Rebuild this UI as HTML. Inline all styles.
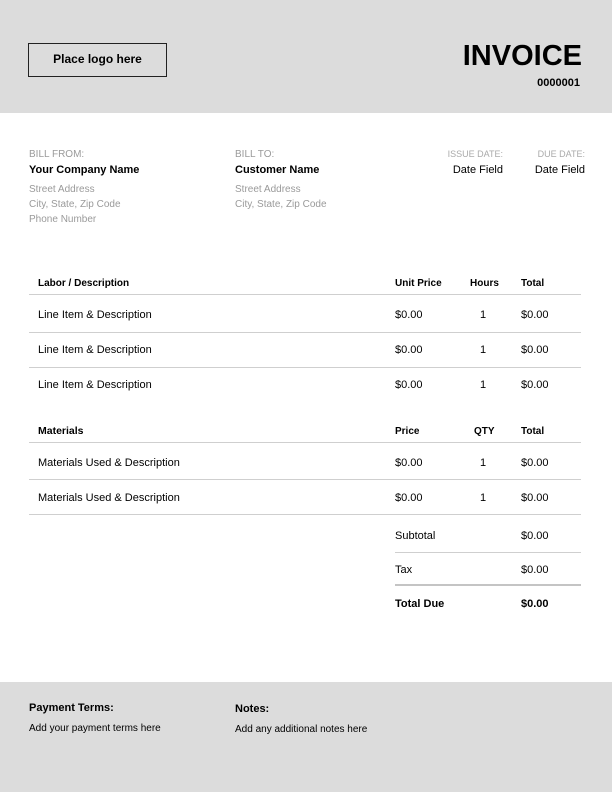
<html><head><style>
body{margin:0;width:612px;height:792px;position:relative;font-family:"Liberation Sans",Arial,sans-serif;background:#fff;overflow:hidden}
.a{position:absolute;white-space:nowrap}
.g{color:#9a9a9a;font-size:10px}
.b{font-weight:bold}
.t{font-size:11px;color:#000}
.l{position:absolute;height:1px;background:#cfcfcf}
</style></head><body>
<div class="a" style="left:0;top:0;width:612px;height:113px;background:#dcdcdc"></div>
<div class="a" style="left:28px;top:43px;width:139px;height:34px;border:1.5px solid #222;box-sizing:border-box;text-align:center;line-height:31px;font-size:12px;font-weight:bold">Place logo here</div>
<div class="a b" style="right:30px;top:40px;font-size:29px">INVOICE</div>
<div class="a b" style="right:32px;top:77px;font-size:11px">0000001</div>

<div class="a g" style="left:29px;top:149px">BILL FROM:</div>
<div class="a b t" style="left:29px;top:164px">Your Company Name</div>
<div class="a g" style="left:29px;top:184px">Street Address</div>
<div class="a g" style="left:29px;top:199px">City, State, Zip Code</div>
<div class="a g" style="left:29px;top:214px">Phone Number</div>
<div class="a g" style="left:235px;top:149px">BILL TO:</div>
<div class="a b t" style="left:235px;top:164px">Customer Name</div>
<div class="a g" style="left:235px;top:184px">Street Address</div>
<div class="a g" style="left:235px;top:199px">City, State, Zip Code</div>
<div class="a g" style="right:109px;top:149px;font-size:9px;color:#aaa">ISSUE DATE:</div>
<div class="a g" style="right:27px;top:149px;font-size:9px;color:#aaa">DUE DATE:</div>
<div class="a t" style="right:109px;top:164px">Date Field</div>
<div class="a t" style="right:27px;top:164px">Date Field</div>

<div class="a b" style="left:38px;top:278px;font-size:10px">Labor / Description</div>
<div class="a b" style="left:395px;top:278px;font-size:10px">Unit Price</div>
<div class="a b" style="left:470px;top:278px;font-size:10px">Hours</div>
<div class="a b" style="left:521px;top:278px;font-size:10px">Total</div>
<div class="l" style="left:29px;width:552px;top:294px"></div>
<div class="a t" style="left:38px;top:309px">Line Item &amp; Description</div><div class="a t" style="left:395px;top:309px">$0.00</div><div class="a t" style="left:480px;top:309px">1</div><div class="a t" style="left:521px;top:309px">$0.00</div>
<div class="l" style="left:29px;width:552px;top:332px"></div>
<div class="a t" style="left:38px;top:344px">Line Item &amp; Description</div><div class="a t" style="left:395px;top:344px">$0.00</div><div class="a t" style="left:480px;top:344px">1</div><div class="a t" style="left:521px;top:344px">$0.00</div>
<div class="l" style="left:29px;width:552px;top:367px"></div>
<div class="a t" style="left:38px;top:379px">Line Item &amp; Description</div><div class="a t" style="left:395px;top:379px">$0.00</div><div class="a t" style="left:480px;top:379px">1</div><div class="a t" style="left:521px;top:379px">$0.00</div>

<div class="a b" style="left:38px;top:425px;font-size:10.5px">Materials</div>
<div class="a b" style="left:395px;top:426px;font-size:10px">Price</div>
<div class="a b" style="left:474px;top:426px;font-size:10px">QTY</div>
<div class="a b" style="left:521px;top:426px;font-size:10px">Total</div>
<div class="l" style="left:29px;width:552px;top:442px"></div>
<div class="a t" style="left:38px;top:457px">Materials Used &amp; Description</div><div class="a t" style="left:395px;top:457px">$0.00</div><div class="a t" style="left:480px;top:457px">1</div><div class="a t" style="left:521px;top:457px">$0.00</div>
<div class="l" style="left:29px;width:552px;top:479px"></div>
<div class="a t" style="left:38px;top:492px">Materials Used &amp; Description</div><div class="a t" style="left:395px;top:492px">$0.00</div><div class="a t" style="left:480px;top:492px">1</div><div class="a t" style="left:521px;top:492px">$0.00</div>
<div class="l" style="left:29px;width:552px;top:514px"></div>

<div class="a t" style="left:395px;top:530px">Subtotal</div><div class="a t" style="left:521px;top:530px">$0.00</div>
<div class="l" style="left:395px;width:186px;top:552px"></div>
<div class="a t" style="left:395px;top:564px">Tax</div><div class="a t" style="left:521px;top:564px">$0.00</div>
<div class="l" style="left:395px;width:186px;top:584px;height:2px;background:#c4c4c4"></div>
<div class="a t b" style="left:395px;top:598px">Total Due</div><div class="a t b" style="left:521px;top:598px">$0.00</div>

<div class="a" style="left:0;top:682px;width:612px;height:110px;background:#dcdcdc"></div>
<div class="a b t" style="left:29px;top:702px">Payment Terms:</div>
<div class="a" style="left:29px;top:723px;font-size:10px">Add your payment terms here</div>
<div class="a b t" style="left:235px;top:703px">Notes:</div>
<div class="a" style="left:235px;top:724px;font-size:10px">Add any additional notes here</div>
</body></html>
